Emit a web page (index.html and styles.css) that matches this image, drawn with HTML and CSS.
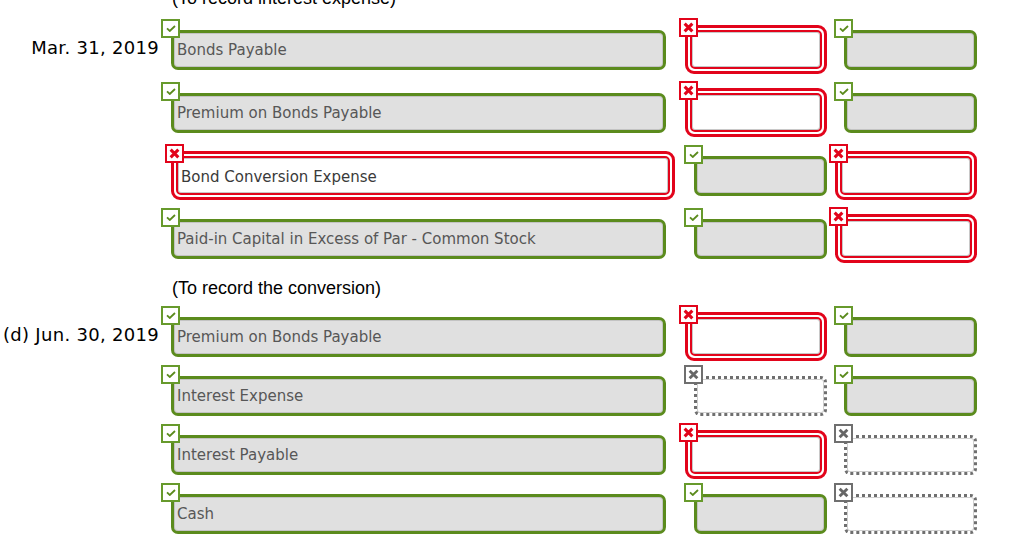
FILE: index.html
```html
<!DOCTYPE html>
<html>
<head>
<meta charset="utf-8">
<link rel="stylesheet" href="styles.css">
</head>
<body>
<div class="sheet">
  <div class="note top">(To record interest expense)</div>

  <div class="row r1">
    <div class="date">Mar. 31, 2019</div>
    <div class="acct"><div class="field ok wide"><span class="badge ok"><svg viewBox="0 0 10 7" width="10" height="7"><path d="M1 3.4 3.8 6 9 1" /></svg></span><span class="txt">Bonds Payable</span></div></div>
    <div class="num"><div class="field bad"><span class="badge bad"><svg viewBox="0 0 10 10" width="11" height="11"><path d="M1.5 1.5 8.5 8.5M8.5 1.5 1.5 8.5" /></svg></span><div class="in"></div></div></div>
    <div class="num"><div class="field ok"><span class="badge ok"><svg viewBox="0 0 10 7" width="10" height="7"><path d="M1 3.4 3.8 6 9 1" /></svg></span></div></div>
  </div>

  <div class="row r1">
    <div class="date"></div>
    <div class="acct"><div class="field ok wide"><span class="badge ok"><svg viewBox="0 0 10 7" width="10" height="7"><path d="M1 3.4 3.8 6 9 1" /></svg></span><span class="txt">Premium on Bonds Payable</span></div></div>
    <div class="num"><div class="field bad"><span class="badge bad"><svg viewBox="0 0 10 10" width="11" height="11"><path d="M1.5 1.5 8.5 8.5M8.5 1.5 1.5 8.5" /></svg></span><div class="in"></div></div></div>
    <div class="num"><div class="field ok"><span class="badge ok"><svg viewBox="0 0 10 7" width="10" height="7"><path d="M1 3.4 3.8 6 9 1" /></svg></span></div></div>
  </div>

  <div class="row r1">
    <div class="date"></div>
    <div class="acct"><div class="field bad wide"><span class="badge bad"><svg viewBox="0 0 10 10" width="11" height="11"><path d="M1.5 1.5 8.5 8.5M8.5 1.5 1.5 8.5" /></svg></span><div class="in"><span class="txt">Bond Conversion Expense</span></div></div></div>
    <div class="num"><div class="field ok"><span class="badge ok"><svg viewBox="0 0 10 7" width="10" height="7"><path d="M1 3.4 3.8 6 9 1" /></svg></span></div></div>
    <div class="num"><div class="field bad"><span class="badge bad"><svg viewBox="0 0 10 10" width="11" height="11"><path d="M1.5 1.5 8.5 8.5M8.5 1.5 1.5 8.5" /></svg></span><div class="in"></div></div></div>
  </div>

  <div class="row r1">
    <div class="date"></div>
    <div class="acct"><div class="field ok wide"><span class="badge ok"><svg viewBox="0 0 10 7" width="10" height="7"><path d="M1 3.4 3.8 6 9 1" /></svg></span><span class="txt">Paid-in Capital in Excess of Par - Common Stock</span></div></div>
    <div class="num"><div class="field ok"><span class="badge ok"><svg viewBox="0 0 10 7" width="10" height="7"><path d="M1 3.4 3.8 6 9 1" /></svg></span></div></div>
    <div class="num"><div class="field bad"><span class="badge bad"><svg viewBox="0 0 10 10" width="11" height="11"><path d="M1.5 1.5 8.5 8.5M8.5 1.5 1.5 8.5" /></svg></span><div class="in"></div></div></div>
  </div>

  <div class="note mid">(To record the conversion)</div>

  <div class="row r2">
    <div class="date">(d) Jun. 30, 2019</div>
    <div class="acct"><div class="field ok wide"><span class="badge ok"><svg viewBox="0 0 10 7" width="10" height="7"><path d="M1 3.4 3.8 6 9 1" /></svg></span><span class="txt">Premium on Bonds Payable</span></div></div>
    <div class="num"><div class="field bad"><span class="badge bad"><svg viewBox="0 0 10 10" width="11" height="11"><path d="M1.5 1.5 8.5 8.5M8.5 1.5 1.5 8.5" /></svg></span><div class="in"></div></div></div>
    <div class="num"><div class="field ok"><span class="badge ok"><svg viewBox="0 0 10 7" width="10" height="7"><path d="M1 3.4 3.8 6 9 1" /></svg></span></div></div>
  </div>

  <div class="row r2">
    <div class="date"></div>
    <div class="acct"><div class="field ok wide"><span class="badge ok"><svg viewBox="0 0 10 7" width="10" height="7"><path d="M1 3.4 3.8 6 9 1" /></svg></span><span class="txt">Interest Expense</span></div></div>
    <div class="num"><div class="field empty"><span class="badge gray"><svg viewBox="0 0 10 10" width="11" height="11"><path d="M1.5 1.5 8.5 8.5M8.5 1.5 1.5 8.5" /></svg></span></div></div>
    <div class="num"><div class="field ok"><span class="badge ok"><svg viewBox="0 0 10 7" width="10" height="7"><path d="M1 3.4 3.8 6 9 1" /></svg></span></div></div>
  </div>

  <div class="row r2">
    <div class="date"></div>
    <div class="acct"><div class="field ok wide"><span class="badge ok"><svg viewBox="0 0 10 7" width="10" height="7"><path d="M1 3.4 3.8 6 9 1" /></svg></span><span class="txt">Interest Payable</span></div></div>
    <div class="num"><div class="field bad"><span class="badge bad"><svg viewBox="0 0 10 10" width="11" height="11"><path d="M1.5 1.5 8.5 8.5M8.5 1.5 1.5 8.5" /></svg></span><div class="in"></div></div></div>
    <div class="num"><div class="field empty"><span class="badge gray"><svg viewBox="0 0 10 10" width="11" height="11"><path d="M1.5 1.5 8.5 8.5M8.5 1.5 1.5 8.5" /></svg></span></div></div>
  </div>

  <div class="row r2">
    <div class="date"></div>
    <div class="acct"><div class="field ok wide"><span class="badge ok"><svg viewBox="0 0 10 7" width="10" height="7"><path d="M1 3.4 3.8 6 9 1" /></svg></span><span class="txt">Cash</span></div></div>
    <div class="num"><div class="field ok"><span class="badge ok"><svg viewBox="0 0 10 7" width="10" height="7"><path d="M1 3.4 3.8 6 9 1" /></svg></span></div></div>
    <div class="num"><div class="field empty"><span class="badge gray"><svg viewBox="0 0 10 10" width="11" height="11"><path d="M1.5 1.5 8.5 8.5M8.5 1.5 1.5 8.5" /></svg></span></div></div>
  </div>
</div>
</body>
</html>
```

FILE: styles.css
```css
html, body {
  margin: 0;
  padding: 0;
  background: #ffffff;
  overflow: hidden;
}

.sheet {
  width: 1024px;
  height: 560px;
  overflow: hidden;
}

.note {
  font-family: "Liberation Sans", Arial, sans-serif;
  font-size: 18px;
  color: #000;
  padding-left: 172px;
  white-space: nowrap;
}

.note.top {
  margin-top: -12px;
  height: 30px;
  line-height: 20px;
}

.note.mid {
  height: 37px;
  line-height: 36px;
}

.row {
  display: grid;
  grid-template-columns: 171px 504px 152px 150px;
  align-items: center;
}

.row.r1 { height: 63px; }
.row.r2 { height: 59px; }

.date {
  font-family: "DejaVu Sans", Verdana, sans-serif;
  font-size: 18px;
  letter-spacing: 0.3px;
  color: #000;
  text-align: right;
  padding-right: 12px;
  padding-bottom: 5px;
  white-space: nowrap;
}

.num {
  display: flex;
  justify-content: flex-end;
}

.field {
  position: relative;
  box-sizing: border-box;
  width: 133px;
}

.field.wide { width: 495px; }
.field.bad { width: 142px; }
.field.bad.wide { width: 504px; }

.field.ok {
  height: 40px;
  border: 3px solid #5b8b1d;
  border-radius: 7px;
  background: #e0e0e0;
  box-shadow: inset 0 0 0 1px #c3c3c3;
}

.field.bad {
  height: 49px;
  border: 3px solid #e2041b;
  border-radius: 9px;
  padding: 2px;
  background: #ffffff;
}

.field.bad .in {
  box-sizing: border-box;
  height: 100%;
  border: 2px solid #e2041b;
  border-radius: 5px;
  box-shadow: inset 0 0 0 1px #c8c8c8;
  background: #ffffff;
}

.field.empty {
  height: 40px;
  border: 3px dotted #6f6f6f;
  border-radius: 6px;
  background: #ffffff;
  box-shadow: inset 0 0 0 1px #cfcfcf;
}

.txt {
  display: block;
  font-family: "DejaVu Sans", Verdana, sans-serif;
  font-size: 15px;
  color: #575757;
  line-height: 34px;
  padding-left: 3px;
  white-space: nowrap;
}

.field.bad .txt {
  color: #3a3a3a;
  line-height: 35px;
  padding-top: 2px;
  padding-left: 3px;
}

.badge {
  position: absolute;
  box-sizing: border-box;
  width: 19px;
  height: 19px;
  border: 2px solid #5b8b1d;
  background: #ffffff;
  display: flex;
  align-items: center;
  justify-content: center;
  z-index: 2;
}

.badge svg path {
  fill: none;
  stroke-linecap: butt;
}

.badge.ok {
  left: -13px;
  top: -14px;
  border-color: #679a2c;
}

.badge.ok svg path {
  stroke: #5b8b1d;
  stroke-width: 1.8;
}

.badge.bad {
  left: -9px;
  top: -10px;
  border-color: #e2041b;
}

.badge.bad svg path {
  stroke: #e2041b;
  stroke-width: 2.8;
}

.badge.gray {
  left: -13px;
  top: -14px;
  border-color: #6f6f6f;
}

.badge.gray svg path {
  stroke: #666666;
  stroke-width: 2.6;
}
```
